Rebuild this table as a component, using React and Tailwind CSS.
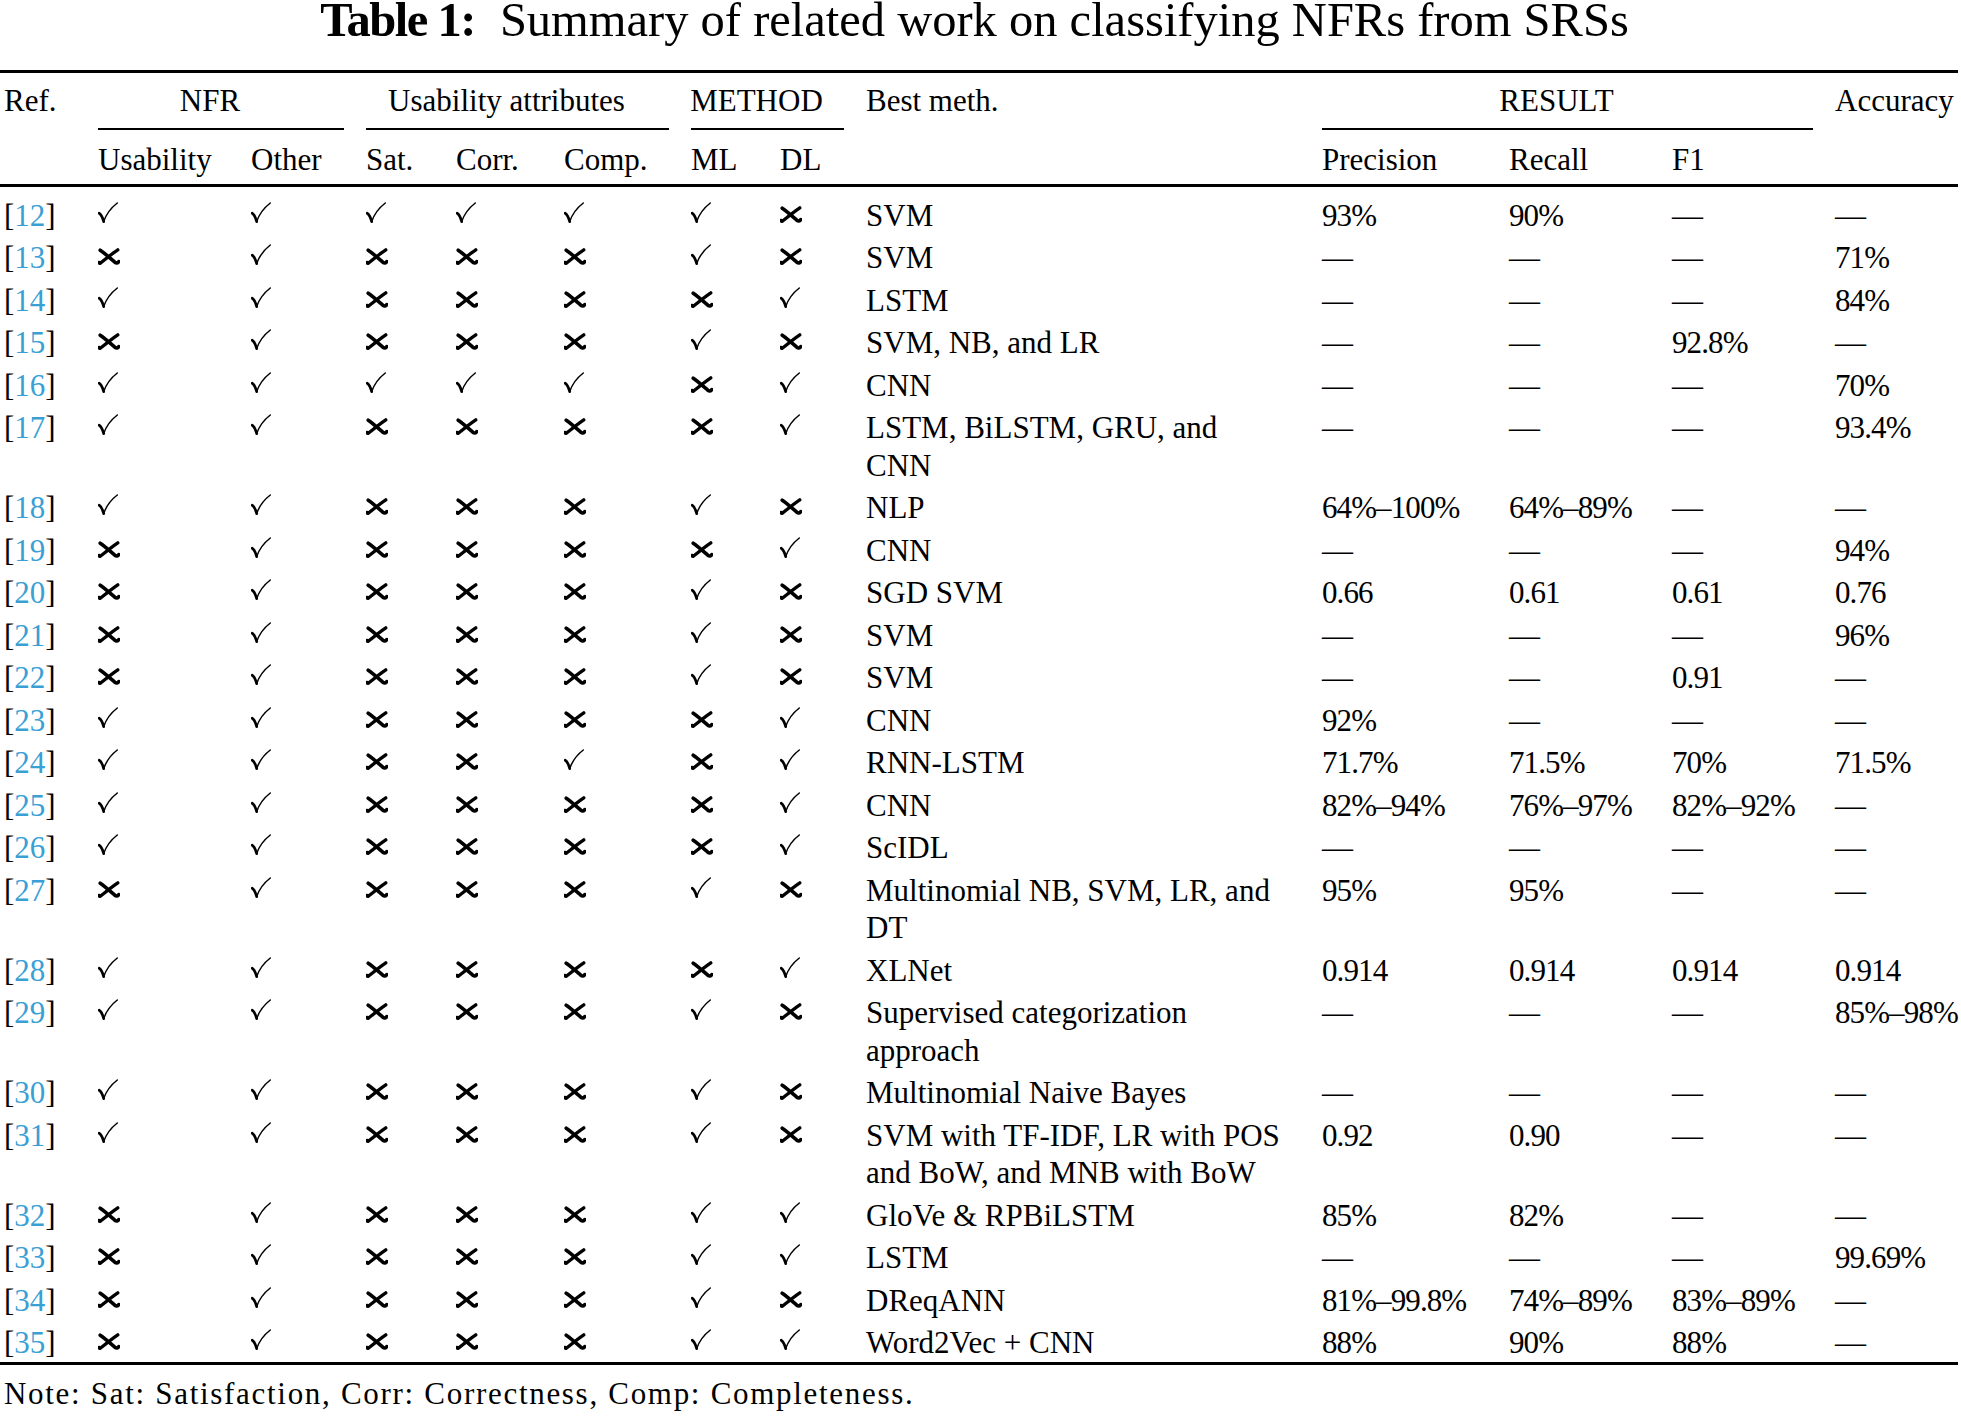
import React from 'react'

const GRID = 'grid grid-cols-[72px_131px_93px_68px_86px_105px_67px_64px_434px_165px_141px_141px_1fr] gap-x-[22px] pl-[4px]'

// y = check, n = cross
const rows = [
    ['12', 'yyyyyyn', ['SVM'], '93%', '90%', '—', '—'],
    ['13', 'nynnnyn', ['SVM'], '—', '—', '—', '71%'],
    ['14', 'yynnnny', ['LSTM'], '—', '—', '—', '84%'],
    ['15', 'nynnnyn', ['SVM, NB, and LR'], '—', '—', '92.8%', '—'],
    ['16', 'yyyyyny', ['CNN'], '—', '—', '—', '70%'],
    ['17', 'yynnnny', ['LSTM, BiLSTM, GRU, and', 'CNN'], '—', '—', '—', '93.4%'],
    ['18', 'yynnnyn', ['NLP'], '64%–100%', '64%–89%', '—', '—'],
    ['19', 'nynnnny', ['CNN'], '—', '—', '—', '94%'],
    ['20', 'nynnnyn', ['SGD SVM'], '0.66', '0.61', '0.61', '0.76'],
    ['21', 'nynnnyn', ['SVM'], '—', '—', '—', '96%'],
    ['22', 'nynnnyn', ['SVM'], '—', '—', '0.91', '—'],
    ['23', 'yynnnny', ['CNN'], '92%', '—', '—', '—'],
    ['24', 'yynnyny', ['RNN-LSTM'], '71.7%', '71.5%', '70%', '71.5%'],
    ['25', 'yynnnny', ['CNN'], '82%–94%', '76%–97%', '82%–92%', '—'],
    ['26', 'yynnnny', ['ScIDL'], '—', '—', '—', '—'],
    ['27', 'nynnnyn', ['Multinomial NB, SVM, LR, and', 'DT'], '95%', '95%', '—', '—'],
    ['28', 'yynnnny', ['XLNet'], '0.914', '0.914', '0.914', '0.914'],
    ['29', 'yynnnyn', ['Supervised categorization', 'approach'], '—', '—', '—', '85%–98%'],
    ['30', 'yynnnyn', ['Multinomial Naive Bayes'], '—', '—', '—', '—'],
    ['31', 'yynnnyn', ['SVM with TF-IDF, LR with POS', 'and BoW, and MNB with BoW'], '0.92', '0.90', '—', '—'],
    ['32', 'nynnnyy', ['GloVe & RPBiLSTM'], '85%', '82%', '—', '—'],
    ['33', 'nynnnyy', ['LSTM'], '—', '—', '—', '99.69%'],
    ['34', 'nynnnyn', ['DReqANN'], '81%–99.8%', '74%–89%', '83%–89%', '—'],
    ['35', 'nynnnyy', ['Word2Vec + CNN'], '88%', '90%', '88%', '—'],
]

function Check() {
    return (
        <svg width="20" height="21" viewBox="0 0 20 21" className="inline-block align-[3px]">
            <path d="M1.2 11.2 Q3.8 12.6 5.7 19.6" fill="none" stroke="#000" strokeWidth="2.7" strokeLinecap="round" />
            <path d="M5.7 19.6 Q9.5 8.5 19.3 1" fill="none" stroke="#000" strokeWidth="1.5" strokeLinecap="round" />
        </svg>
    )
}

function Cross() {
    return (
        <svg width="22" height="17" viewBox="0 0 22 17" className="inline-block align-[3px]">
            <path d="M2.2 2.2 C6.5 5 12 10 16.8 14.2 Q19.2 16 20.8 13.6" fill="none" stroke="#000" strokeWidth="3.6" strokeLinecap="round" />
            <path d="M19.8 1.8 C15 5 8.5 10.2 2.6 15 Q1.2 15.8 1 14.4" fill="none" stroke="#000" strokeWidth="3.3" strokeLinecap="round" />
        </svg>
    )
}

function Group({ label, span }) {
    return (
        <div className={span}>
            <div className="-ml-[22px] text-center">{label}</div>
            <div className="mt-[8.7px] h-[2px] bg-black" />
        </div>
    )
}

export default function App() {
    return (
        <div className="w-[1961px] min-h-screen bg-white text-black font-['Liberation_Serif','Times_New_Roman',serif]">
            <h1 className="flex justify-center pr-[12px] text-[48.5px] leading-[40px] font-normal whitespace-nowrap">
                <span className="font-bold tracking-[-1.5px]">Table 1:</span>
                <span className="ml-[25px]">Summary of related work on classifying NFRs from SRSs</span>
            </h1>

            <div className="mt-[30px] w-[1958px] text-[31px] leading-[37.5px] whitespace-nowrap">
                <div className="h-[3px] bg-black" />

                <div className={`${GRID} mt-[9px]`}>
                    <div>Ref.</div>
                    <Group label="NFR" span="col-span-2" />
                    <Group label="Usability attributes" span="col-span-3" />
                    <Group label="METHOD" span="col-span-2" />
                    <div>Best meth.</div>
                    <Group label="RESULT" span="col-span-3" />
                    <div>Accuracy</div>
                </div>

                <div className={`${GRID} mt-[10.8px]`}>
                    <div />
                    <div>Usability</div>
                    <div>Other</div>
                    <div>Sat.</div>
                    <div>Corr.</div>
                    <div>Comp.</div>
                    <div>ML</div>
                    <div>DL</div>
                    <div />
                    <div>Precision</div>
                    <div>Recall</div>
                    <div>F1</div>
                    <div />
                </div>

                <div className="mt-[5.7px] h-[3px] bg-black" />

                <div className="mt-[9.8px] flex flex-col gap-y-[5px]">
                    {rows.map(([ref, marks, meth, p, r, f, a]) => (
                        <div key={ref} className={GRID}>
                            <div>
                                [<span className="text-[#3a9fd5]">{ref}</span>]
                            </div>
                            {marks.split('').map((m, i) => (
                                <div key={i}>{m === 'y' ? <Check /> : <Cross />}</div>
                            ))}
                            <div>
                                {meth.map((line, i) => (
                                    <div key={i}>{line}</div>
                                ))}
                            </div>
                            <div className="tracking-[-0.9px]">{p}</div>
                            <div className="tracking-[-0.9px]">{r}</div>
                            <div className="tracking-[-0.9px]">{f}</div>
                            <div className="tracking-[-0.9px]">{a}</div>
                        </div>
                    ))}
                </div>

                <div className="h-[3px] bg-black" />

                <p className="mt-[10px] pl-[4px] tracking-[1.7px]">Note: Sat: Satisfaction, Corr: Correctness, Comp: Completeness.</p>
            </div>
        </div>
    )
}
